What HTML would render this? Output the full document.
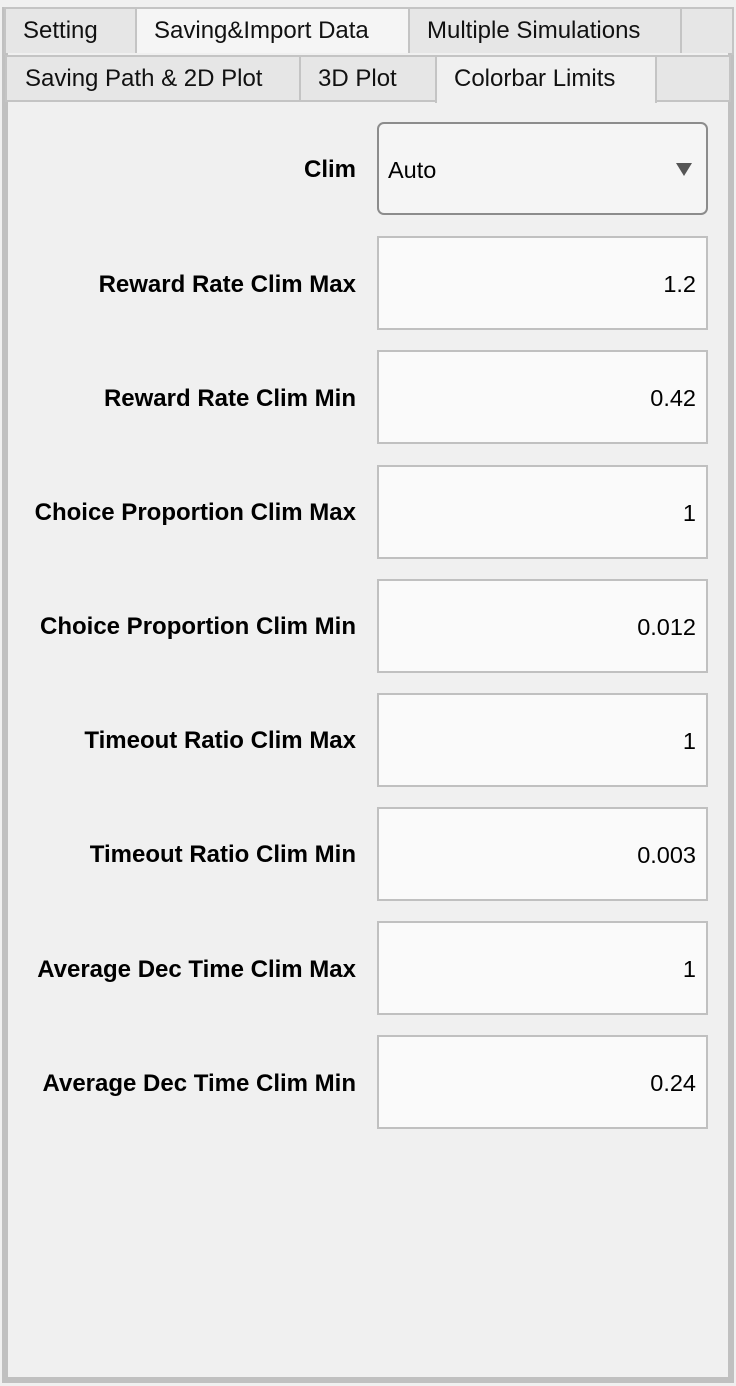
<!DOCTYPE html>
<html><head><style>
*{margin:0;padding:0;box-sizing:border-box}
body{width:736px;height:1386px;background:#f0f0f0;font-family:"Liberation Sans",Arial,sans-serif;position:relative;overflow:hidden}
.a{position:absolute}
.tab{position:absolute;border:2px solid #c4c4c4;background:#e6e6e6;font-size:24px;color:#111;padding-left:17px;line-height:44px;white-space:nowrap}
.sel{background:#f5f5f5;border-bottom:none}
.lbl{position:absolute;right:380px;font-weight:bold;font-size:24px;color:#000;text-align:right;white-space:nowrap}
.fld{position:absolute;left:377px;width:331px;height:94px;border:2px solid #c0c0c0;background:#fafafa;font-size:23.5px;text-align:right;padding-right:10px;line-height:92px;color:#000}
</style></head><body>
<div class="a" style="left:2px;top:7px;width:732px;height:1376px;border:3px solid #c0c0c0;border-top:none"></div>
<div class="tab" style="left:4px;top:7px;width:133px;height:48px">Setting</div>
<div class="tab sel" style="left:135px;top:7px;width:275px;height:48px">Saving&amp;Import Data</div>
<div class="tab" style="left:408px;top:7px;width:274px;height:48px">Multiple Simulations</div>
<div class="tab" style="left:680px;top:7px;width:54px;height:48px"></div>
<div class="a" style="left:5px;top:53px;width:726px;height:1327px;border:3px solid #c0c0c0;border-top:none;background:#f0f0f0"></div>
<div class="tab" style="left:5px;top:55px;width:296px;height:47px;padding-left:18px">Saving Path &amp; 2D Plot</div>
<div class="tab" style="left:299px;top:55px;width:138px;height:47px">3D Plot</div>
<div class="tab sel" style="left:435px;top:55px;width:222px;height:48px;background:#f0f0f0">Colorbar Limits</div>
<div class="tab" style="left:655px;top:55px;width:76px;height:47px"></div>

<div class="lbl" style="top:156px">Clim</div>
<div class="a" style="left:377px;top:122px;width:331px;height:93px;border:2px solid #8c8c8c;border-radius:7px;background:#f5f5f5;font-size:23.5px;line-height:92px;padding-left:9px">Auto<span class="a" style="right:14px;top:39px;width:0;height:0;border-left:8px solid transparent;border-right:8px solid transparent;border-top:13px solid #555"></span></div>

<div class="lbl" style="top:271px">Reward Rate Clim Max</div><div class="fld" style="top:236px">1.2</div>
<div class="lbl" style="top:385px">Reward Rate Clim Min</div><div class="fld" style="top:350px">0.42</div>
<div class="lbl" style="top:499px">Choice Proportion Clim Max</div><div class="fld" style="top:465px">1</div>
<div class="lbl" style="top:613px">Choice Proportion Clim Min</div><div class="fld" style="top:579px">0.012</div>
<div class="lbl" style="top:727px">Timeout Ratio Clim Max</div><div class="fld" style="top:693px">1</div>
<div class="lbl" style="top:841px">Timeout Ratio Clim Min</div><div class="fld" style="top:807px">0.003</div>
<div class="lbl" style="top:956px">Average Dec Time Clim Max</div><div class="fld" style="top:921px">1</div>
<div class="lbl" style="top:1070px">Average Dec Time Clim Min</div><div class="fld" style="top:1035px">0.24</div>
</body></html>
